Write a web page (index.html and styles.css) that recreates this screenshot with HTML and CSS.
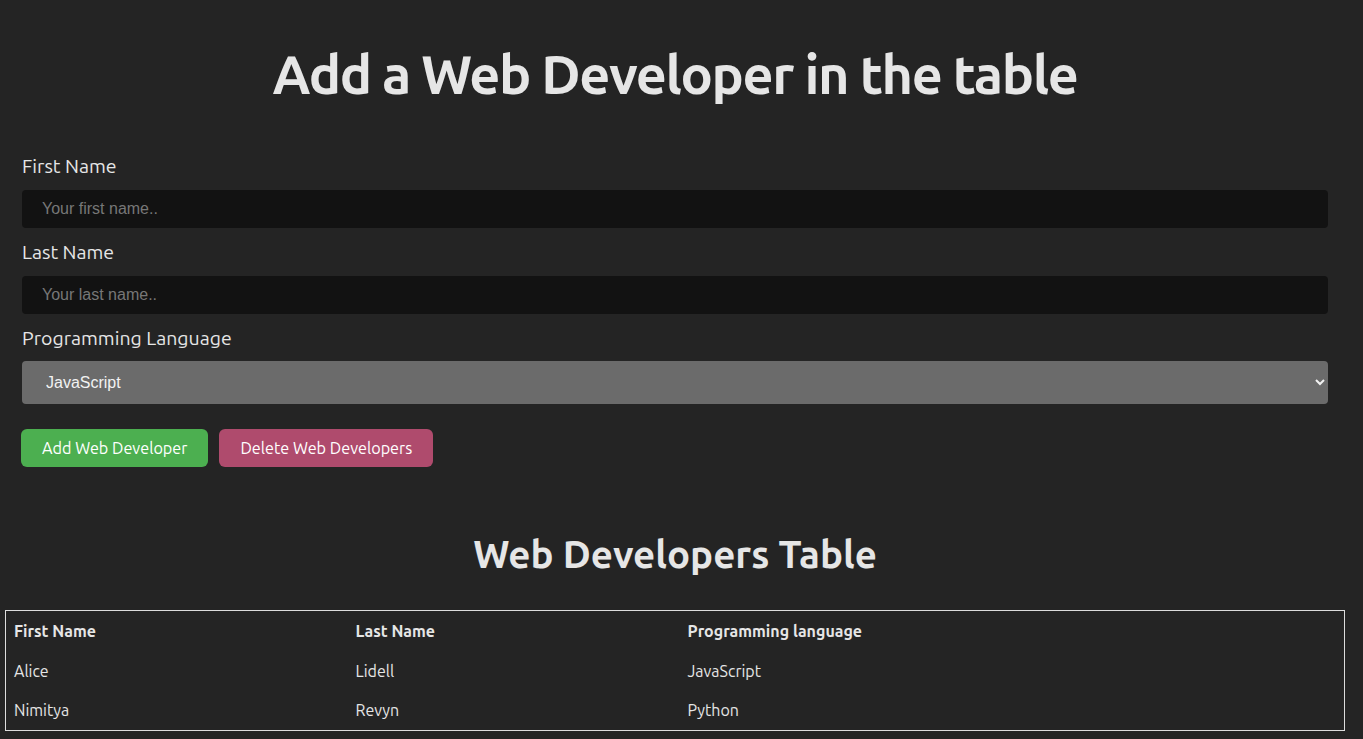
FILE: index.html
```html
<!DOCTYPE html>
<html lang="en">
<head>
<meta charset="utf-8">
<title>Web Developers</title>
<link rel="stylesheet" href="styles.css">
</head>
<body>
<main class="page">
  <section class="form-section">
    <h1 class="title">Add a Web Developer in the table</h1>
    <form class="dev-form">
      <label class="field-label" for="first">First Name</label>
      <input class="text-input" id="first" type="text" placeholder="Your first name..">
      <label class="field-label" for="last">Last Name</label>
      <input class="text-input" id="last" type="text" placeholder="Your last name..">
      <label class="field-label" for="lang">Programming Language</label>
      <select class="select-input" id="lang">
        <option>JavaScript</option>
        <option>Python</option>
      </select>
      <div class="actions">
        <button type="button" class="btn btn-add">Add Web Developer</button>
        <button type="button" class="btn btn-delete">Delete Web Developers</button>
      </div>
    </form>
  </section>
  <section class="table-section">
    <h2 class="subtitle">Web Developers Table</h2>
    <table class="dev-table">
      <thead>
        <tr><th class="col-first">First Name</th><th class="col-last">Last Name</th><th>Programming language</th></tr>
      </thead>
      <tbody>
        <tr><td>Alice</td><td>Lidell</td><td>JavaScript</td></tr>
        <tr><td>Nimitya</td><td>Revyn</td><td>Python</td></tr>
      </tbody>
    </table>
  </section>
</main>
</body>
</html>
```
FILE: styles.css
```css
* { box-sizing: border-box; }
html, body { margin: 0; padding: 0; }
body {
  background: #242424;
  color: #e6e6e6;
  font-family: "Ubuntu", "Open Sans", "Noto Sans", sans-serif;
}
.page { display: flex; flex-direction: column; }
.form-section { padding: 0 35px 0 22px; }
.title {
  margin: 0;
  padding-top: 39px;
  height: 152px;
  text-align: center;
  font-size: 54px;
  font-weight: 700;
  letter-spacing: -1.4px;
  line-height: 70px;
}
.dev-form { display: flex; flex-direction: column; }
.field-label {
  font-size: 19.5px;
  line-height: 24px;
  height: 38px;
  padding-top: 2px;
}
.text-input {
  height: 38px;
  margin: 0 0 10px 0;
  border: none;
  border-radius: 4px;
  background: #121212;
  color: #ddd;
  padding: 0 20px;
  font-family: "Liberation Sans", Arial, sans-serif;
  font-size: 16px;
  outline: none;
}
.text-input::placeholder { color: #777; }
.select-input {
  height: 43px;
  margin-top: -1px;
  border: none;
  border-radius: 4px;
  background: #6b6b6b;
  color: #f2f2f2;
  padding: 0 20px;
  font-family: "Liberation Sans", Arial, sans-serif;
  font-size: 16px;
}
.actions { display: flex; gap: 11px; margin: 25px 0 0 -1px; }
.btn {
  height: 38px;
  padding: 0 21px;
  border: none;
  border-radius: 6px;
  color: #fff;
  font-family: "Ubuntu", "Open Sans", "Noto Sans", sans-serif;
  font-size: 16.2px;
}
.btn-add { background: #4caf50; }
.btn-delete { background: #af4b6d; }
.table-section { padding: 0 18px 0 5px; }
.subtitle {
  margin: 0;
  padding-top: 62px;
  height: 143px;
  text-align: center;
  font-size: 38.5px;
  font-weight: 700;
  line-height: 50px;
}
.dev-table {
  width: 100%;
  border: 1px solid #ddd;
  border-collapse: collapse;
  font-size: 16px;
}
.dev-table th, .dev-table td {
  text-align: left;
  padding: 0 8px;
  height: 40px;
}
.dev-table th { font-weight: 700; }
.col-first { width: 342px; }
.col-last { width: 332px; }
```
